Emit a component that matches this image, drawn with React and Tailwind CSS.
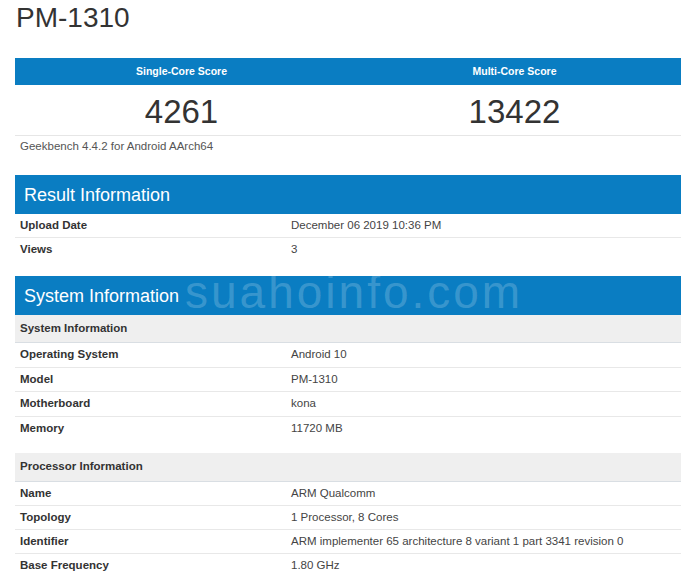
import React from 'react';

const systemRows = [
  ['Operating System', 'Android 10'],
  ['Model', 'PM-1310'],
  ['Motherboard', 'kona'],
  ['Memory', '11720 MB'],
];

const processorRows = [
  ['Name', 'ARM Qualcomm'],
  ['Topology', '1 Processor, 8 Cores'],
  ['Identifier', 'ARM implementer 65 architecture 8 variant 1 part 3341 revision 0'],
  ['Base Frequency', '1.80 GHz'],
];

function InfoRows({ rows, rowHeight }) {
  return (
    <div className="divide-y divide-[#e8e8e8]">
      {rows.map(([label, value]) => (
        <div key={label} className={`grid grid-cols-[271px_1fr] items-center ${rowHeight}`}>
          <div className="px-[5px] font-bold text-[#333]">{label}</div>
          <div className="px-[5px] text-[#444]">{value}</div>
        </div>
      ))}
    </div>
  );
}

function SectionHeader({ title, children }) {
  return (
    <div className="relative h-[39px] bg-[#0a7dc2] flex items-center pl-[9px] text-[18px] text-white">
      {title}
      {children}
    </div>
  );
}

function SubHeader({ title, height }) {
  return (
    <div className={`${height} flex items-center px-[5px] bg-[#efefef] border-b border-[#d9dee3] font-bold text-[#333]`}>
      {title}
    </div>
  );
}

export default function App() {
  return (
    <div
      className="w-[696px] h-[586px] overflow-hidden bg-white text-[11.5px] leading-none"
      style={{ fontFamily: '"Liberation Sans", Arial, sans-serif' }}
    >
      {/* Title */}
      <div className="h-[58px] pl-[16px] pt-[4px]">
        <h1 className="text-[28px] leading-none text-[#333]">PM-1310</h1>
      </div>

      <div className="mx-[15px]">
        {/* Scores */}
        <div className="grid grid-cols-2 h-[27px] bg-[#0a7dc2] text-white font-bold text-[10.5px]">
          <div className="flex items-center justify-center">Single-Core Score</div>
          <div className="flex items-center justify-center">Multi-Core Score</div>
        </div>
        <div className="grid grid-cols-2 h-[51px] border-b border-[#e6e6e6] text-[33px] text-[#333]">
          <div className="flex justify-center pt-[10px]">4261</div>
          <div className="flex justify-center pt-[10px]">13422</div>
        </div>
        <div className="h-[22px] flex items-center px-[5px] text-[#555]">
          Geekbench 4.4.2 for Android AArch64
        </div>

        {/* Result information */}
        <div className="mt-[17px]">
          <SectionHeader title="Result Information" />
          <InfoRows
            rows={[
              ['Upload Date', 'December 06 2019 10:36 PM'],
              ['Views', '3'],
            ]}
            rowHeight="h-[24px]"
          />
        </div>

        {/* System information */}
        <div className="mt-[14px]">
          <SectionHeader title="System Information">
            <span className="absolute left-[170px] top-[-7px] text-[46px] leading-none tracking-[3px] text-white/20 pointer-events-none">
              suahoinfo.com
            </span>
          </SectionHeader>
          <SubHeader title="System Information" height="h-[28px]" />
          <InfoRows rows={systemRows} rowHeight="h-[24.5px]" />

          <div className="mt-[12px]">
            <SubHeader title="Processor Information" height="h-[29px]" />
            <InfoRows rows={processorRows} rowHeight="h-[24px]" />
          </div>
        </div>
      </div>
    </div>
  );
}
